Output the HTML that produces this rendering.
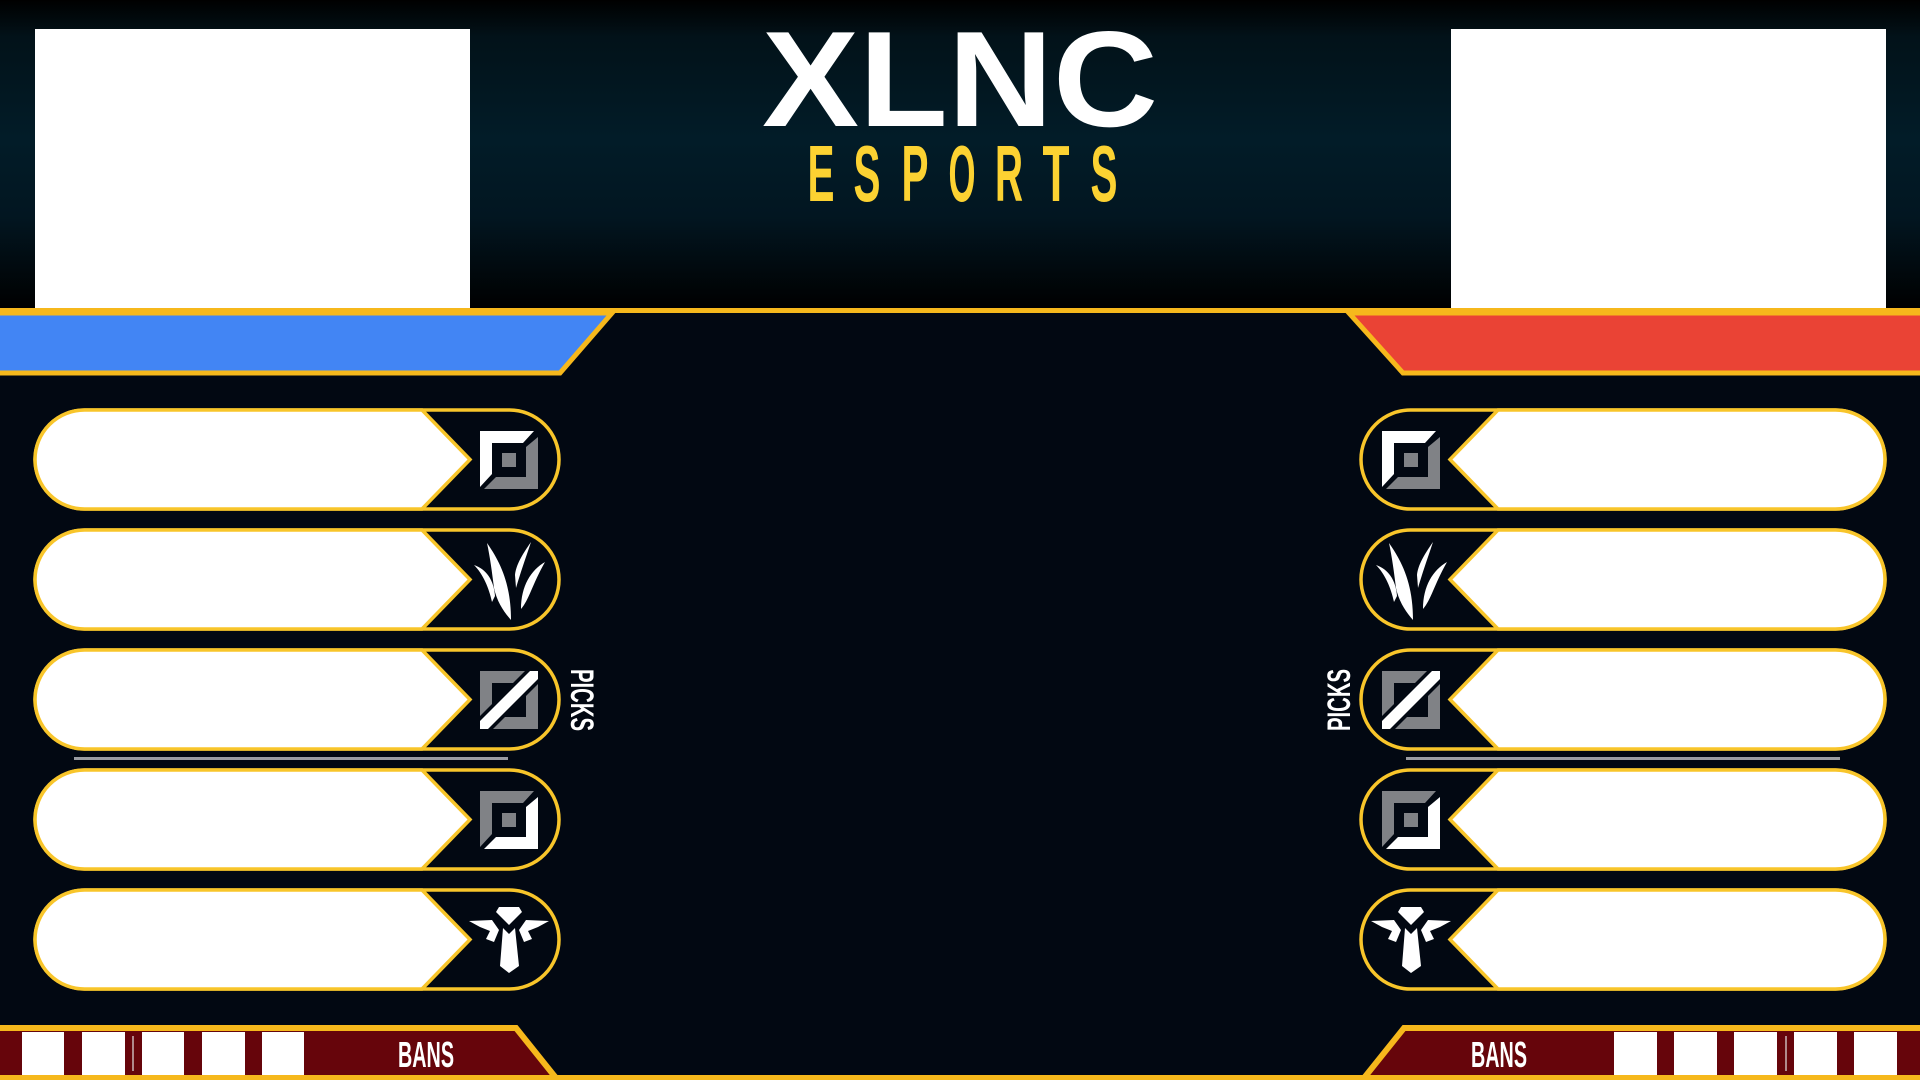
<!DOCTYPE html>
<html><head><meta charset="utf-8"><style>html,body{margin:0;padding:0;background:#020812;}svg{display:block}</style></head>
<body>
<svg width="1920" height="1080" viewBox="0 0 1920 1080" xmlns="http://www.w3.org/2000/svg" font-family="'Liberation Sans Narrow','Liberation Sans',sans-serif">
<defs>
<linearGradient id="hg" x1="0" y1="0" x2="0" y2="1">
<stop offset="0" stop-color="#000000"/>
<stop offset="0.12" stop-color="#021219"/>
<stop offset="0.45" stop-color="#021c28"/>
<stop offset="0.7" stop-color="#021621"/>
<stop offset="1" stop-color="#000000"/>
</linearGradient>
<g id="ic-top">
<path d="M21,21 L75,21 L64,33 L33,33 L33,64 L21,77 Z" fill="#fff"/>
<path d="M79,27 L79,79 L25,79 L37,67 L67,67 L67,37 Z" fill="#808286"/>
<rect x="43" y="43" width="14" height="14" fill="#808286"/>
</g>
<g id="ic-bot">
<path d="M21,21 L75,21 L64,33 L33,33 L33,64 L21,77 Z" fill="#808286"/>
<path d="M79,27 L79,79 L25,79 L37,67 L67,67 L67,37 Z" fill="#fff"/>
<rect x="43" y="43" width="14" height="14" fill="#808286"/>
</g>
<g id="ic-mid">
<path d="M21,21 H79 V79 H21 Z M33,33 V67 H67 V33 Z" fill="#808286" fill-rule="evenodd"/>
<path d="M21,66 L66,21 L79,21 L79,34 L34,79 L21,79 Z" fill="#020812"/>
<path d="M21,71 L71,21 L79,21 L79,29 L29,79 L21,79 Z" fill="#fff"/>
</g>
<g id="ic-jg" fill="#fff">
<path d="M28,13 C42,33 52,55 52,90 C45,82 38,72 35,58 C33,42 31,27 28,13 Z"/>
<path d="M15,35 C27,39 35,50 36,66 L33,72 C30,58 24,44 15,35 Z"/>
<path d="M72,12 C63,25 57,35 56,45 L57,58 C61,44 66,30 72,12 Z"/>
<path d="M86,32 C72,40 62,56 62,79 C70,70 73,55 86,32 Z"/>
</g>
<g id="ic-sup" fill="#fff">
<path d="M40,17 L60,17 L63,22 L50,35 L37,22 Z"/>
<path d="M10,31 L33,30 L40,40 L35,52 L27,49 L31,41 L21,37 Z"/>
<path d="M90,31 L67,30 L60,40 L65,52 L73,49 L69,41 L79,37 Z"/>
<path d="M44,38 L50,44 L56,38 L60,76 L50,83 L41,76 Z"/>
</g>
</defs>

<rect width="1920" height="1080" fill="#020812"/>
<rect x="0" y="0" width="1920" height="309" fill="url(#hg)"/>
<rect x="35" y="29" width="435" height="280" fill="#fff"/>
<rect x="1451" y="29" width="435" height="280" fill="#fff"/>

<!-- logo -->
<text x="960" y="126" text-anchor="middle" font-family="'Liberation Sans',sans-serif" font-weight="bold" font-size="136" fill="#fff" textLength="396" lengthAdjust="spacingAndGlyphs">XLNC</text>
<g font-weight="bold" font-size="80" fill="#fcd232" text-anchor="middle">
<text x="821" y="201" textLength="27" lengthAdjust="spacingAndGlyphs">E</text>
<text x="867" y="201" textLength="27" lengthAdjust="spacingAndGlyphs">S</text>
<text x="915" y="201" textLength="27" lengthAdjust="spacingAndGlyphs">P</text>
<text x="962" y="201" textLength="27" lengthAdjust="spacingAndGlyphs">O</text>
<text x="1009" y="201" textLength="28" lengthAdjust="spacingAndGlyphs">R</text>
<text x="1056" y="201" textLength="27" lengthAdjust="spacingAndGlyphs">T</text>
<text x="1104" y="201" textLength="27" lengthAdjust="spacingAndGlyphs">S</text>
</g>

<!-- team bars -->
<path d="M-10,313 L612,313 L560,373 L-10,373 Z" fill="#4285f4" stroke="#f6b81c" stroke-width="5"/>
<path d="M1349,313 L1930,313 L1930,373 L1403,373 Z" fill="#ea4335" stroke="#f6b81c" stroke-width="5"/>
<rect x="0" y="308" width="1920" height="5" fill="#f6b81c"/>

<!-- pills -->
<g stroke="#f8c52a" stroke-width="3.5">
<g id="lp1"><rect x="35" y="410" width="524" height="99" rx="49.5" fill="#020812"/><path d="M84.5,410 L422,410 L470,459.5 L422,509 L84.5,509 A49.5,49.5 0 0 1 84.5,410 Z" fill="#fff"/></g>
<use href="#lp1" y="120"/><use href="#lp1" y="240"/><use href="#lp1" y="360"/><use href="#lp1" y="480"/>
<g id="rp1"><rect x="1361" y="410" width="524" height="99" rx="49.5" fill="#020812"/><path d="M1835.5,410 L1498,410 L1450,459.5 L1498,509 L1835.5,509 A49.5,49.5 0 0 0 1835.5,410 Z" fill="#fff"/></g>
<use href="#rp1" y="120"/><use href="#rp1" y="240"/><use href="#rp1" y="360"/><use href="#rp1" y="480"/>
</g>

<use href="#ic-top" x="459" y="410"/>
<use href="#ic-jg" x="459" y="530"/>
<use href="#ic-mid" x="459" y="650"/>
<use href="#ic-bot" x="459" y="770"/>
<use href="#ic-sup" x="459" y="890"/>
<use href="#ic-top" x="1361" y="410"/>
<use href="#ic-jg" x="1361" y="530"/>
<use href="#ic-mid" x="1361" y="650"/>
<use href="#ic-bot" x="1361" y="770"/>
<use href="#ic-sup" x="1361" y="890"/>

<rect x="74" y="757" width="434" height="3" fill="#9a9ca2"/>
<rect x="1406" y="757" width="434" height="3" fill="#9a9ca2"/>

<text transform="translate(571,700) rotate(90)" text-anchor="middle" font-weight="bold" font-size="32" fill="#fff" textLength="62" lengthAdjust="spacingAndGlyphs">PICKS</text>
<text transform="translate(1350,700) rotate(-90)" text-anchor="middle" font-weight="bold" font-size="32" fill="#fff" textLength="62" lengthAdjust="spacingAndGlyphs">PICKS</text>

<!-- bans -->
<rect x="0" y="1075" width="1920" height="5" fill="#f6b81c"/>
<path d="M-10,1028 L516,1028 L556,1078 L-10,1078 Z" fill="#66050b" stroke="#f6b81c" stroke-width="6"/>
<path d="M1930,1028 L1404,1028 L1364,1078 L1930,1078 Z" fill="#66050b" stroke="#f6b81c" stroke-width="6"/>
<g fill="#fff">
<rect x="22" y="1032" width="42" height="43"/>
<rect x="82" y="1032" width="43" height="43"/>
<rect x="142" y="1032" width="42" height="43"/>
<rect x="202" y="1032" width="43" height="43"/>
<rect x="262" y="1032" width="42" height="43"/>
<rect x="1614" y="1032" width="43" height="43"/>
<rect x="1674" y="1032" width="43" height="43"/>
<rect x="1734" y="1032" width="43" height="43"/>
<rect x="1794" y="1032" width="43" height="43"/>
<rect x="1854" y="1032" width="43" height="43"/>
</g>
<rect x="132" y="1036" width="2" height="35" fill="#b08a8c"/>
<rect x="1785" y="1036" width="2" height="35" fill="#b08a8c"/>
<text x="426" y="1067" text-anchor="middle" font-weight="bold" font-size="36" fill="#fff" textLength="56" lengthAdjust="spacingAndGlyphs">BANS</text>
<text x="1499" y="1067" text-anchor="middle" font-weight="bold" font-size="36" fill="#fff" textLength="56" lengthAdjust="spacingAndGlyphs">BANS</text>
</svg>
</body></html>
